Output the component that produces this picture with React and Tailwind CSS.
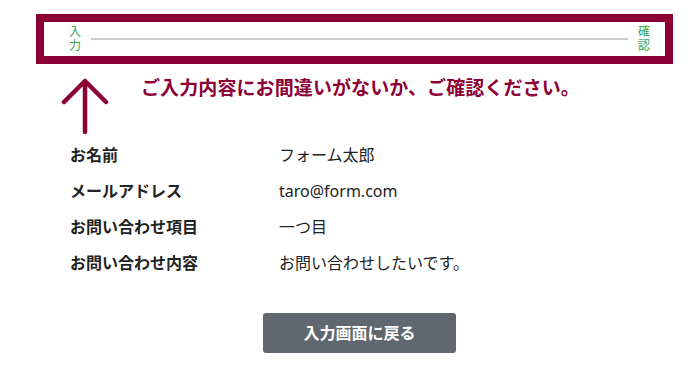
export default function App() {
  const rows = [
    ["お名前", "フォーム太郎"],
    ["メールアドレス", "taro@form.com"],
    ["お問い合わせ項目", "一つ目"],
    ["お問い合わせ内容", "お問い合わせしたいです。"],
  ];
  return (
    <div
      className="w-[699px] h-[372px] bg-white overflow-hidden"
      style={{ fontFamily: '"Noto Sans", "Noto Sans CJK JP", sans-serif' }}
    >
      <div className="ml-[36px] mt-[14px] w-[637px] h-[50px] border-[8px] border-[#8c0036] bg-white flex items-center pl-[25px] pr-[15px]">
        <div className="flex flex-col text-[12px] leading-[14px] text-[#34a354]">
          <span>入</span>
          <span>力</span>
        </div>
        <div className="flex-1 h-[2px] bg-[#cccccc] mx-[10px]" />
        <div className="flex flex-col text-[12px] leading-[14px] text-[#34a354]">
          <span>確</span>
          <span>認</span>
        </div>
      </div>
      <div className="flex ml-[61px] mt-[14px]">
        <svg width="48" height="58" viewBox="0 0 48 58" className="shrink-0">
          <path
            d="M24 4 L24 54 M3 24 L24 3 L45 24"
            fill="none"
            stroke="#8c0036"
            strokeWidth="4.5"
            strokeLinecap="round"
            strokeLinejoin="round"
          />
        </svg>
        <div className="ml-[32px] mt-[-2px] text-[19px] font-bold leading-[24px] tracking-[0.1px] text-[#8c0036]">
          ご入力内容にお間違いがないか、ご確認ください。
        </div>
      </div>
      <div className="ml-[70px] mt-[8px] flex flex-col gap-[14px]">
        {rows.map(([k, v]) => (
          <div key={k} className="flex text-[16px] leading-[22px] text-[#222222]">
            <div className="w-[209px] font-bold">{k}</div>
            <div>{v}</div>
          </div>
        ))}
      </div>
      <div className="flex justify-center mt-[39px] pl-[20px]">
        <button className="w-[193px] h-[40px] rounded-[3px] bg-[#5f6870] text-white font-bold text-[16px]">
          入力画面に戻る
        </button>
      </div>
    </div>
  );
}
